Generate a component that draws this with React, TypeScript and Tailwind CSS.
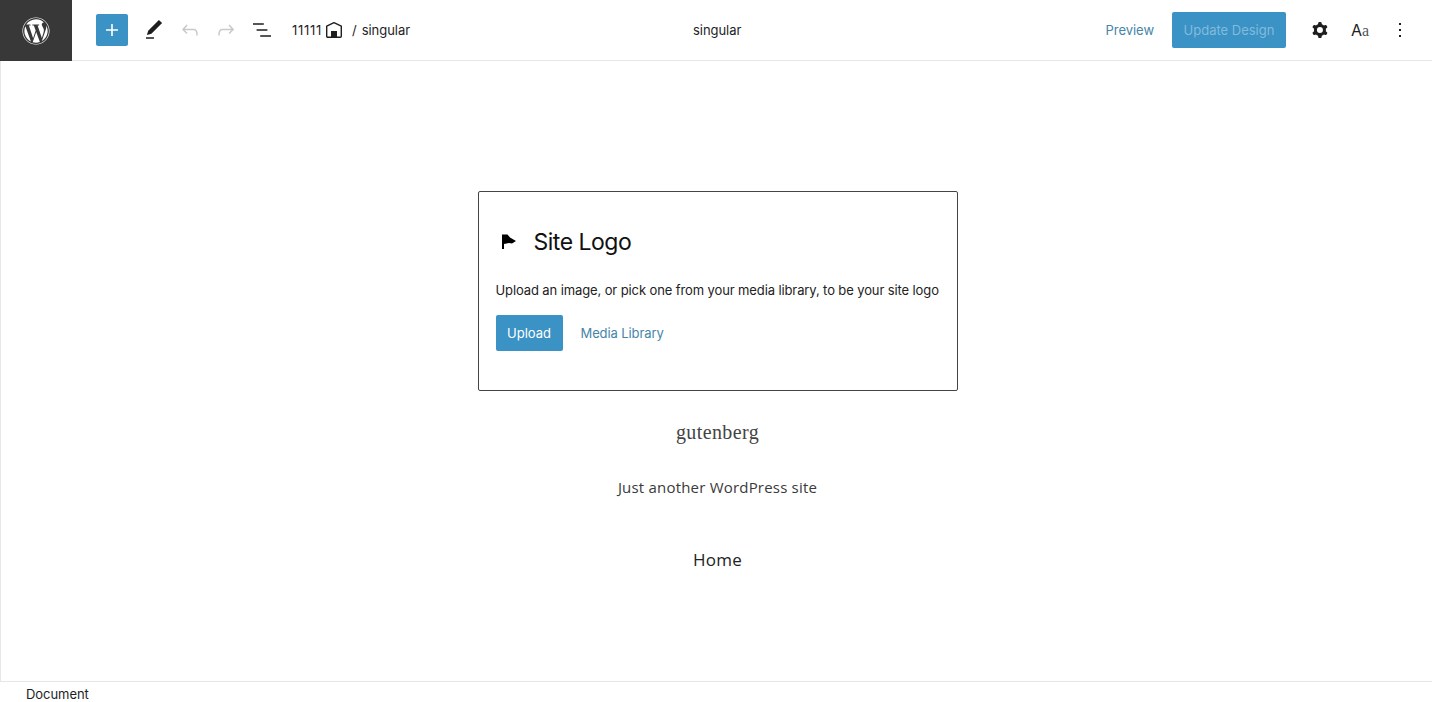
import { FaWordpress } from "react-icons/fa";

const ui = "font-['Inter','Liberation_Sans',sans-serif]";

function Icon({ d, className, evenOdd }: { d: string; className: string; evenOdd?: boolean }) {
  return (
    <svg viewBox="0 0 24 24" className={className} fill="currentColor">
      <path d={d} fillRule={evenOdd ? "evenodd" : undefined} clipRule={evenOdd ? "evenodd" : undefined} />
    </svg>
  );
}

const plus = "M18 11.2h-5.2V6h-1.6v5.2H6v1.6h5.2V18h1.6v-5.2H18z";
const pencil = "M20.1 5.1L16.9 2 6.2 12.7l-1.3 4.4 4.5-1.3L20.1 5.1zM4 20.8h8v-1.5H4v1.5z";
const undo = "M18.3 11.7c-.6-.6-1.4-.9-2.3-.9H6.7l2.9-3.3-1.1-1-4.5 5L8.5 16l1-1-2.7-2.7H16c.5 0 .9.2 1.3.5 1 1 1 3.4 1 4.5v.3h1.5v-.2c0-1.5 0-4.3-1.5-5.7z";
const redo = "M15.6 6.5l-1.1 1 2.9 3.3H8c-.9 0-1.7.3-2.3.9-1.4 1.5-1.4 4.2-1.4 5.6v.2h1.5v-.3c0-1.1 0-3.5 1-4.5.3-.3.7-.5 1.3-.5h9.2L14.5 15l1.1 1.1 4.6-4.6-4.6-5z";
const listView = "M13.8 5.2H3v1.5h10.8V5.2zm-3.6 12v1.5H21v-1.5H10.2zm7.2-6H6.6v1.5h10.8v-1.5z";
const cog = "M10.289 4.836A1 1 0 0111.275 4h1.306a1 1 0 01.987.836l.244 1.466c.787.26 1.503.679 2.108 1.218l1.393-.522a1 1 0 011.216.437l.653 1.13a1 1 0 01-.23 1.273l-1.148.944a6.025 6.025 0 010 2.435l1.149.946a1 1 0 01.23 1.272l-.653 1.13a1 1 0 01-1.216.437l-1.394-.522c-.605.54-1.32.958-2.108 1.218l-.244 1.466a1 1 0 01-.987.836h-1.306a1 1 0 01-.986-.836l-.244-1.466a5.995 5.995 0 01-2.108-1.218l-1.394.522a1 1 0 01-1.217-.436l-.653-1.131a1 1 0 01.23-1.272l1.149-.946a6.026 6.026 0 010-2.435l-1.148-.944a1 1 0 01-.23-1.272l.653-1.131a1 1 0 011.217-.437l1.393.522a5.994 5.994 0 012.108-1.218l.244-1.466zM14.929 12a3 3 0 11-6 0 3 3 0 016 0z";
const more = "M13 19h-2v-2h2v2zm0-6h-2v-2h2v2zm0-6h-2V5h2v2z";
const flag = "M5 4.5h2V19H5zM7 4.500h3.500l2.500 3 6 3.500-4 2.500-3-.5-5 1z";

function HomeIcon() {
  return (
    <svg viewBox="0 0 18 18" className="ml-[3px] h-[18px] w-[18px]" fill="none" stroke="currentColor" strokeWidth="1.4" strokeLinejoin="round">
      <path d="M1.700 5.200 9 1.700l7.300 3.500V15.300a1 1 0 0 1-1 1H2.700a1 1 0 0 1-1-1z" />
      <path d="M6 10h6v7H6z" fill="currentColor" stroke="none" />
    </svg>
  );
}

export default function App() {
  return (
    <div className={`${ui} flex h-[702px] w-[1432px] flex-col overflow-hidden bg-white text-[13px] text-[#1e1e1e]`}>
      <header className="relative flex h-[61px] shrink-0 items-center border-b border-[#e6e6e6]">
        <div className="flex h-[61px] w-[72px] shrink-0 items-center justify-center self-start bg-[#383838] text-white">
          <FaWordpress size={28} />
        </div>
        <div className="ml-6 flex h-8 w-8 items-center justify-center rounded-[2px] bg-[#3a92c5] text-white">
          <Icon d={plus} className="h-6 w-6" />
        </div>
        <Icon d={pencil} className="ml-[14px] h-6 w-6 text-[#1e1e1e]" />
        <Icon d={undo} className="ml-3 h-6 w-6 text-[#c9c9c9]" />
        <Icon d={redo} className="ml-3 h-6 w-6 text-[#c9c9c9]" />
        <Icon d={listView} className="ml-3 h-6 w-6 text-[#1e1e1e]" />
        <span className="ml-[18px] w-[30px] pt-[2px] tracking-[0.7px]">11111</span>
        <HomeIcon />
        <span className="ml-[9px] pt-[2px]">/</span>
        <span className="ml-[5px] pt-[2px] tracking-[-0.05px]">singular</span>
        <span className="absolute left-[693px] pt-[2px] tracking-[-0.05px]">singular</span>
        <div className="ml-auto flex items-center">
          <span className="pt-[2px] tracking-[-0.05px] text-[#4485a8]">Preview</span>
          <div className="ml-[18px] flex h-9 w-[114px] items-center justify-center rounded-[2px] bg-[#3a92c5] pt-[2px] text-[#82bbdc]">
            Update Design
          </div>
          <Icon d={cog} evenOdd className="ml-[22px] h-6 w-6" />
          <span className="ml-[19px] flex w-[18px] items-baseline pt-[1px] leading-none">
            <span className="text-[16px]">A</span>
            <span className="font-['Liberation_Serif',serif] text-[16px] text-[#555]">a</span>
          </span>
          <Icon d={more} className="ml-[19px] mr-5 h-6 w-6" />
        </div>
      </header>

      <main className="flex flex-1 flex-col items-center border-b border-l border-[#e6e6e6] pl-[2px] pt-[130px]">
        <section className="flex h-[200px] w-[480px] flex-col rounded-[2px] border border-[#444] px-[17px] pt-[34px]">
          <div className="flex h-8 items-center">
            <Icon d={flag} className="ml-[1px] h-6 w-6 text-black" />
            <h2 className="ml-[13px] text-[23px] leading-8 tracking-[-0.5px] text-[#111]">Site Logo</h2>
          </div>
          <p className="mt-[23px] whitespace-nowrap leading-[18px] tracking-[-0.11px] text-[#222]">
            Upload an image, or pick one from your media library, to be your site logo
          </p>
          <div className="mt-4 flex items-center">
            <div className="flex h-9 w-[67px] items-center justify-center rounded-[2px] bg-[#3a92c5] pt-[1px] text-white">Upload</div>
            <span className="ml-[18px] pt-[2px] tracking-[-0.1px] text-[#4485a8]">Media Library</span>
          </div>
        </section>
        <p className="mt-[27px] font-['Liberation_Serif',serif] text-xl leading-7 tracking-[0.4px] text-[#444]">gutenberg</p>
        <p className="mt-[30px] font-['Open_Sans',sans-serif] text-[15px] leading-[22px] tracking-[0.2px] text-[#3a3a3a]">
          Just another WordPress site
        </p>
        <p className="mt-[50px] font-['Open_Sans',sans-serif] text-[17px] leading-6 tracking-[0.3px] text-[#222]">Home</p>
      </main>

      <footer className="flex h-[20px] shrink-0 items-center pl-[26px] pt-[4px] leading-none tracking-[-0.05px]">Document</footer>
    </div>
  );
}
